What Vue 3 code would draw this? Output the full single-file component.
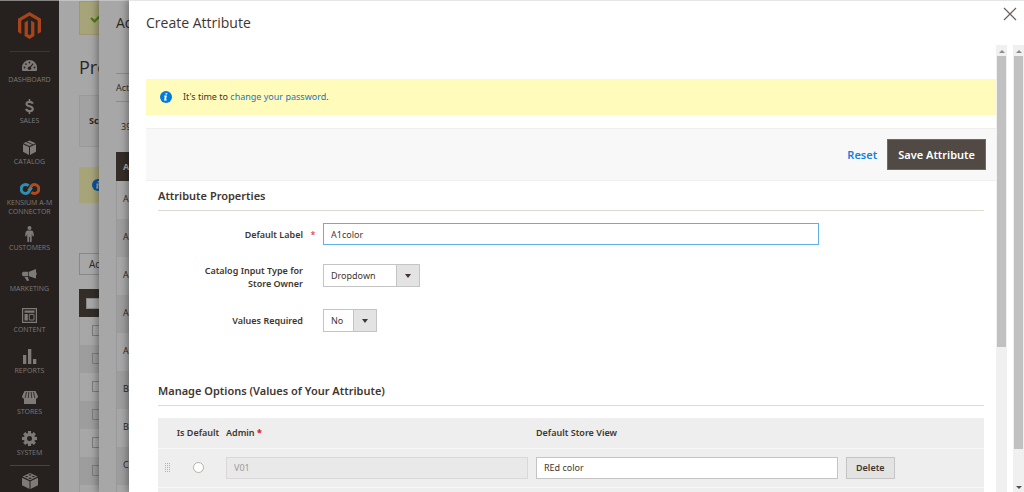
<script setup>
import { ref } from 'vue'

const menu = [
  { id: 'dashboard', label: 'Dashboard' },
  { id: 'sales', label: 'Sales' },
  { id: 'catalog', label: 'Catalog' },
  { id: 'kensium', label: 'Kensium A-M Connector' },
  { id: 'customers', label: 'Customers' },
  { id: 'marketing', label: 'Marketing' },
  { id: 'pages', label: 'Content' },
  { id: 'reports', label: 'Reports' },
  { id: 'stores', label: 'Stores' },
  { id: 'system', label: 'System' }
]
const attributeRows = ['A', 'A', 'A', 'A', 'A', 'B', 'B', 'C', '']
const defaultLabel = ref('A1color')
const inputType = ref('Dropdown')
const required = ref('No')
const adminValue = ref('V01')
const storeValue = ref('REd color')
</script>

<template>
  <div class="screen">
    <nav class="sidebar">
      <a href="#" class="logo" aria-label="Home">
        <svg width="23" height="27" viewBox="0 0 23 27" fill="#a9431a">
          <path d="M11.5 0 23 6.7V20l-3.3 2V8.6l-8.2-4.8-8.2 4.8V22L0 20V6.7z" />
          <path d="M6.6 10.5 9.9 8.6v13.6l1.6.9 1.6-.9V8.6l3.3 1.9v13.6L11.5 27l-4.9-2.9z" />
        </svg>
      </a>
      <a v-for="m in menu" :key="m.id" href="#" class="item" :class="m.id">
        <span class="glyph">
          <svg v-if="m.id === 'dashboard'" width="15" height="11" viewBox="0 0 15 11">
            <path fill="currentColor" d="M7.5 0A7.5 7.5 0 0 0 0 7.5V10q0 1 1 1h13q1 0 1-1V7.500A7.500 7.500 0 0 0 7.500 0z" />
            <g fill="#26211e"><circle cx="2.500" cy="7.500" r=".9" /><circle cx="4" cy="4.100" r=".9" /><circle cx="7.500" cy="2.500" r=".9" /><circle cx="12.500" cy="7.500" r=".9" /><circle cx="7.500" cy="8.300" r="1.700" /></g>
            <path d="m7.800 7.600 3.400-4" stroke="#26211e" stroke-width="1.100" />
          </svg>
          <svg v-else-if="m.id === 'sales'" width="9" height="15" viewBox="0 0 9 15" fill="none" stroke="currentColor">
            <path stroke-width="2.100" d="M7.700 4.800C7.300 3.500 6.200 2.900 4.500 2.900 2.600 2.900 1.500 3.700 1.500 5c0 3.200 6.300 1.500 6.300 4.900 0 1.400-1.200 2.200-3.300 2.200-1.800 0-3.100-.8-3.400-2.300" />
            <path stroke-width="1.600" d="M4.500 0v3M4.500 12v3" />
          </svg>
          <svg v-else-if="m.id === 'catalog'" width="13" height="15" viewBox="0 0 13 15" fill="currentColor">
            <path d="m0 4.300 6 2.600V15L0 11.800zM7 6.900l6-2.600v7.500L7 15zM.4 3.300 3 2.100l6.200 2.700-2.700 1.200zM4 1.600 6.500.5l6.100 2.800-2.400 1.100z" />
          </svg>
          <svg v-else-if="m.id === 'kensium'" width="20" height="12" viewBox="0 0 20 12" fill="none" stroke-width="3">
            <path stroke="#b14a20" d="M8.500 7.800 11.500 3Q12.600 1.500 14.300 1.500a4.500 4.500 0 0 1 0 9Q12.600 10.500 11.400 9.200" />
            <path stroke="#2d8fb3" d="M8.600 2.800Q7.400 1.500 5.700 1.500a4.500 4.500 0 0 0 0 9Q7.500 10.500 8.600 9L11.500 4.500" />
          </svg>
          <svg v-else-if="m.id === 'customers'" width="9" height="16" viewBox="0 0 9 16" fill="currentColor">
            <circle cx="4.500" cy="2" r="2" />
            <path d="M2.600 4.500h3.800Q8 4.500 8.300 6l.7 4-1.200.5-1-2.500-.2 8H4.900v-5h-.8v5H2.400l-.2-8-1 2.500L0 10l.7-4Q1 4.500 2.600 4.500z" />
          </svg>
          <svg v-else-if="m.id === 'marketing'" width="15" height="12" viewBox="0 0 15 12" fill="currentColor">
            <path d="M14 0v9.500L7 7.300V2.700zM6.300 2.800v4.400H1.500Q0 7.200 0 5t1.500-2.200zM2.500 8h3.300l1.400 3.400-2.300.6zM14.300 3.300q.7.200.7 1.500t-.7 1.500z" />
          </svg>
          <svg v-else-if="m.id === 'pages'" width="15" height="15" viewBox="0 0 15 15">
            <path fill="none" stroke="currentColor" stroke-width="1.200" d="M.6.6h13.800v13.800H.6z" />
            <path fill="currentColor" d="M2.500 2.500h10v2.300h-10zM2.500 5.900h3.300v6.600H2.500z" />
            <path fill="none" stroke="currentColor" d="M7.300 6.400H12V12H7.300z" />
          </svg>
          <svg v-else-if="m.id === 'reports'" width="14" height="15" viewBox="0 0 14 15" fill="currentColor">
            <path d="M0 6h3.300v9H0zM5 0h3.300v15H5zM10 10h3.300v5H10z" />
          </svg>
          <svg v-else-if="m.id === 'stores'" width="16" height="13" viewBox="0 0 16 13">
            <path fill="currentColor" d="M2.500 0h11L16 5.200Q16 7.500 14 7.700V13H2V7.700Q0 7.500 0 5.200z" />
            <path stroke="#26211e" stroke-width=".8" d="M4.500 1 3.200 7M6.800 1l-.5 6M9.200 1l.5 6M11.500 1l1.300 6" />
          </svg>
          <svg v-else width="15" height="15" viewBox="-7.500 -7.500 15 15">
            <g fill="currentColor">
              <rect v-for="a in [0, 45, 90, 135]" :key="a" x="-1.600" y="-7.500" width="3.200" height="15" :transform="`rotate(${a})`" />
            </g>
            <circle r="4" fill="none" stroke="currentColor" stroke-width="3.200" />
            <circle r="2.500" fill="#26211e" />
          </svg>
        </span>
        <span class="caption">{{ m.label }}</span>
      </a>
      <a href="#" class="partners" aria-label="Find partners">
        <svg width="16" height="16" viewBox="0 0 16 16" fill="currentColor">
          <path d="m0 4.800 7.500 3.400V16L0 12.200zM8.500 8.200 16 4.800v7.400L8.500 16zM8 0l7.500 3.600L8 7.200.5 3.600z" />
          <g fill="#26211e"><ellipse cx="8" cy="1.900" rx="1.500" ry=".7" /><ellipse cx="4.600" cy="3.600" rx="1.500" ry=".7" /><ellipse cx="11.400" cy="3.600" rx="1.500" ry=".7" /><ellipse cx="8" cy="5.300" rx="1.500" ry=".7" /></g>
        </svg>
      </a>
    </nav>

    <main class="page">
      <div class="success">
        <svg width="12" height="9" viewBox="0 0 12 9" fill="none" stroke="#4f7a1c" stroke-width="2.400"><path d="m1 4 3.500 3.300L11 1" /></svg>
      </div>
      <h1>Prod</h1>
      <div class="scope">Sco</div>
      <div class="page-note">
        <svg width="12" height="12" viewBox="0 0 12 12"><circle cx="6" cy="6" r="6" fill="#0a52a0" /><path fill="#a7a7a7" d="M5.700 2h1.700l-.3 1.500H5.400zM4.400 4.500h2.500L6 8.600h.9l-.2 1H4l.8-4.100H4z" /></svg>
      </div>
      <div class="actions">Acti</div>
      <div class="grid-head"><i></i></div>
      <div class="grid-rows">
        <div v-for="n in 7" :key="n" class="grid-row"><i></i></div>
      </div>
    </main>

    <section class="panel back-panel">
      <h2>Add</h2>
      <div class="filters">Act</div>
      <div class="count">39</div>
      <div class="list-head">A</div>
      <div class="list-rows">
        <div v-for="(r, i) in attributeRows" :key="i" class="list-row">{{ r }}</div>
      </div>
    </section>

    <section class="panel front-panel" role="dialog" aria-labelledby="dialog-title">
      <header class="dialog-head">
        <h2 id="dialog-title">Create Attribute</h2>
        <button class="close" type="button" aria-label="Close">
          <svg width="14" height="14" viewBox="0 0 14 14" fill="none" stroke="#6b635c" stroke-width="1.300"><path d="m1 1 12 12M13 1 1 13" /></svg>
        </button>
      </header>
      <div class="dialog-body">
        <form class="content" @submit.prevent>
          <div class="notice">
            <svg width="12" height="12" viewBox="0 0 12 12"><circle cx="6" cy="6" r="6" fill="#007bdb" /><path fill="#fff" d="M5.700 2h1.700l-.3 1.500H5.400zM4.400 4.500h2.500L6 8.600h.9l-.2 1H4l.8-4.100H4z" /></svg>
            <p>It's time to <a href="#">change your password</a>.</p>
          </div>
          <div class="toolbar">
            <button type="button" class="reset">Reset</button>
            <button type="submit" class="save">Save Attribute</button>
          </div>
          <section class="block properties">
            <h3>Attribute Properties</h3>
            <div class="field">
              <label for="label">Default Label</label><span class="star">*</span>
              <input id="label" v-model="defaultLabel" class="text focused" type="text" />
            </div>
            <div class="field">
              <label for="type">Catalog Input Type for Store Owner</label><span class="star"></span>
              <span class="select wide"><select id="type" v-model="inputType"><option>Dropdown</option></select></span>
            </div>
            <div class="field">
              <label for="required">Values Required</label><span class="star"></span>
              <span class="select"><select id="required" v-model="required"><option>No</option><option>Yes</option></select></span>
            </div>
          </section>
          <section class="block">
            <h3>Manage Options (Values of Your Attribute)</h3>
            <table>
              <colgroup><col class="c-drag" /><col class="c-default" /><col class="c-value" /><col class="c-value" /><col /></colgroup>
              <thead>
                <tr><th></th><th class="center">Is Default</th><th>Admin <b>*</b></th><th>Default Store View</th><th></th></tr>
              </thead>
              <tbody>
                <tr>
                  <td class="drag">
                    <svg width="6" height="10" viewBox="0 0 6 10" fill="#b5b1ac">
                      <template v-for="y in 5" :key="y"><rect v-for="x in 3" :key="x" :x="x * 2 - 2" :y="y * 2 - 2" width="1" height="1" /></template>
                    </svg>
                  </td>
                  <td class="center"><input type="radio" name="default" aria-label="Is Default" /></td>
                  <td><input v-model="adminValue" class="text" type="text" disabled aria-label="Admin" /></td>
                  <td><input v-model="storeValue" class="text" type="text" aria-label="Default Store View" /></td>
                  <td><button type="button" class="delete">Delete</button></td>
                </tr>
                <tr><td colspan="5"></td></tr>
              </tbody>
            </table>
          </section>
        </form>
        <div class="scroll inner"><i class="up"></i><div class="thumb"></div></div>
        <div class="scroll outer"><i class="up"></i><div class="thumb"></div><i class="down"></i></div>
      </div>
    </section>
  </div>
</template>

<style>
body { margin: 0; overflow: hidden; }
</style>

<style scoped>
* { box-sizing: border-box; }
.screen {
  position: relative;
  display: flex;
  height: 100vh;
  overflow: hidden;
  background: #a7a7a7;
  color: #41362f;
  font-family: "Open Sans", "Noto Sans", sans-serif;
  font-size: 9px;
}
h1, h2, h3, p { margin: 0; }
a { text-decoration: none; }
svg { display: block; flex: none; }
button, input, select { font: inherit; color: inherit; margin: 0; border-radius: 0; }

.sidebar {
  display: flex;
  flex-direction: column;
  flex: none;
  align-items: center;
  width: 59px;
  background: #26211e;
  border-top: 1px solid #878583;
  color: #7d7a78;
}
.logo { flex: none; width: 40px; height: 51px; margin-bottom: 5px; padding: 11px 8px 0; border-bottom: 1px solid #3b3734; }
.item { display: flex; flex: none; flex-direction: column; align-items: center; width: 100%; padding-bottom: 14px; color: inherit; }
.item.kensium { padding-bottom: 9px; }
.item.system { padding-bottom: 8px; }
.glyph { display: flex; align-items: center; height: 17px; margin-bottom: 1px; }
.caption { max-width: 52px; font-size: 7px; line-height: 9px; text-align: center; text-transform: uppercase; }
.partners { width: 40px; padding: 7px 12px 0; border-top: 1px solid #47433f; color: inherit; }

.page { flex: 1; padding-left: 20px; border-top: 1px solid #c4c4c4; color: #2c2622; }
.success { height: 34px; padding: 12px 10px; background: #a7a47a; border: 1px solid #9c9972; }
.page h1 { height: 60px; padding-top: 20px; font-size: 18px; line-height: 24px; font-weight: 400; }
.scope { height: 52px; padding-left: 9px; border: 1px solid #999; background: #a2a2a2; font-weight: 700; line-height: 50px; }
.page-note { height: 36px; margin: 20px 0 50px; padding: 12px 13px; background: #a7a47a; }
.actions { height: 22px; margin-bottom: 14px; padding-left: 9px; border: 1px solid #888; font-size: 10px; line-height: 20px; }
.grid-head { height: 28px; padding: 9px 7px; background: #332c27; }
.grid-head i { display: block; width: 22px; height: 11px; background: #a7a7a7; border: 1px solid #888; }
.grid-row { height: 28px; padding: 8px 12px; border-left: 1px solid #999; }
.grid-row:nth-child(even) { background: #9d9d9d; }
.grid-row i { display: block; width: 11px; height: 11px; border: 1px solid #7f7d7b; }

.panel { position: absolute; top: 0; right: 0; bottom: 0; }
.back-panel {
  left: 99px;
  padding-left: 17px;
  background: #a7a7a7;
  border-top: 1px solid #c4c4c4;
  box-shadow: 0 0 8px 1px rgba(0, 0, 0, .4);
  color: #2c2622;
}
.back-panel h2 { height: 72px; padding-top: 12px; font-size: 14px; line-height: 20px; font-weight: 400; }
.filters { height: 29px; border: solid #8c8a88; border-width: 1px 0; line-height: 27px; }
.count { height: 50px; padding-left: 5px; line-height: 50px; }
.list-head { height: 29px; padding-left: 7px; background: #332c27; color: #a7a7a7; font-weight: 700; line-height: 29px; }
.list-row { height: 38px; padding-left: 6px; border-left: 1px solid #999; line-height: 36px; }
.list-row:nth-child(even) { background: #9d9d9d; }

.front-panel {
  left: 129px;
  display: flex;
  flex-direction: column;
  padding-left: 17px;
  background: #fff;
  border-top: 1px solid #e6e6e6;
  box-shadow: 0 0 8px 1px rgba(0, 0, 0, .4);
}
.dialog-head { display: flex; flex: none; justify-content: space-between; align-items: flex-start; height: 44px; padding: 6px 7px 0 0; }
.dialog-head h2 { padding-top: 6px; font-size: 14px; line-height: 20px; font-weight: 400; }
.close { padding: 0; border: 0; background: none; }
.dialog-body { display: flex; flex: 1; min-height: 0; }
.content { flex: 1; min-width: 0; overflow: hidden; padding-top: 34px; font-family: "Noto Sans", "Open Sans", sans-serif; }
.notice { display: flex; align-items: center; gap: 11px; height: 36px; padding-left: 14px; background: #fffbbb; }
.notice p { line-height: 14px; }
.notice a { color: #1979c3; }
.toolbar {
  display: flex;
  justify-content: flex-end;
  align-items: center;
  gap: 10px;
  height: 53px;
  margin-top: 13px;
  padding-right: 10px;
  background: #f8f8f8;
  border: solid #efefef;
  border-width: 1px 0;
}
.toolbar button { font-size: 11px; font-weight: 600; line-height: 16px; }
.reset { padding: 0; border: 0; background: none; color: #1580db; }
.save { height: 31px; padding: 0 10px; border: 1px solid #736963; background: #514943; color: #fff; }

.block { padding: 0 12px; }
.block h3 { height: 30px; padding-top: 7px; border-bottom: 1px solid #dddbd0; font-size: 11px; line-height: 16px; font-weight: 600; }
.properties { height: 195px; }
.properties h3 { margin-bottom: 12px; }
.field { display: flex; align-items: center; margin-bottom: 19px; }
.field label { width: 145px; padding-left: 40px; font-weight: 600; line-height: 13px; text-align: right; }
.star { width: 20px; text-align: center; color: #e22626; }
.text { width: 100%; height: 22px; padding: 0 7px; border: 1px solid #c4c4c4; background: #fff; line-height: 20px; }
.text:disabled { background: #e9e9e9; border-color: #d9d9d9; color: #9e9a97; }
.field .text { width: 60%; }
.text.focused { border-color: #5fb0e8; }
.select { position: relative; align-self: flex-start; width: 54px; height: 23px; }
.select.wide { width: 97px; }
.select select {
  display: block;
  width: 100%;
  height: 100%;
  padding: 0 0 0 7px;
  border: 1px solid #c4c4c4;
  background: linear-gradient(#c4c4c4, #c4c4c4) right 22px top 0 / 1px 100% no-repeat, linear-gradient(#e3e3e3, #e3e3e3) right / 22px 100% no-repeat #fff;
  appearance: none;
}
.select::after {
  content: "";
  position: absolute;
  top: 10px;
  right: 9px;
  border: solid transparent;
  border-width: 4px 3px 0;
  border-top-color: #41362f;
  pointer-events: none;
}

table { width: 100%; margin-top: 12px; border-collapse: collapse; table-layout: fixed; background: #eee; }
.c-drag { width: 16px; }
.c-default { width: 48px; }
.c-value { width: 310px; }
th, td { height: 30px; padding: 0 4px; text-align: left; font-weight: 600; line-height: 14px; white-space: nowrap; }
th b { color: #e22626; }
td { height: 39px; border-top: 1px solid #f8f8f8; font-weight: 400; }
.center { padding: 0; text-align: center; }
.drag { padding: 0 0 0 7px; }
input[type="radio"] { display: block; width: 11px; height: 11px; margin: 0 auto; border: 1px solid #b5b1ac; border-radius: 50%; background: #fff; appearance: none; }
.delete { height: 22px; padding: 0 9px; border: 1px solid #c4c4c4; background: #e3e3e3; font-weight: 600; }

.scroll { display: flex; flex: none; flex-direction: column; align-items: center; width: 11px; background: #f0f0f0; }
.inner { margin-right: 6px; }
.up, .down { flex: none; border: solid transparent; }
.up { margin: 5px 0 3px; border-width: 0 3px 3px; border-bottom-color: #8b8b8b; }
.thumb { width: 9px; background: #c1c1c1; }
.inner .thumb { height: 65%; }
.outer .thumb { height: 88%; }
.down { margin: auto 0 3px; border-width: 3px 3px 0; border-top-color: #505050; }
</style>
